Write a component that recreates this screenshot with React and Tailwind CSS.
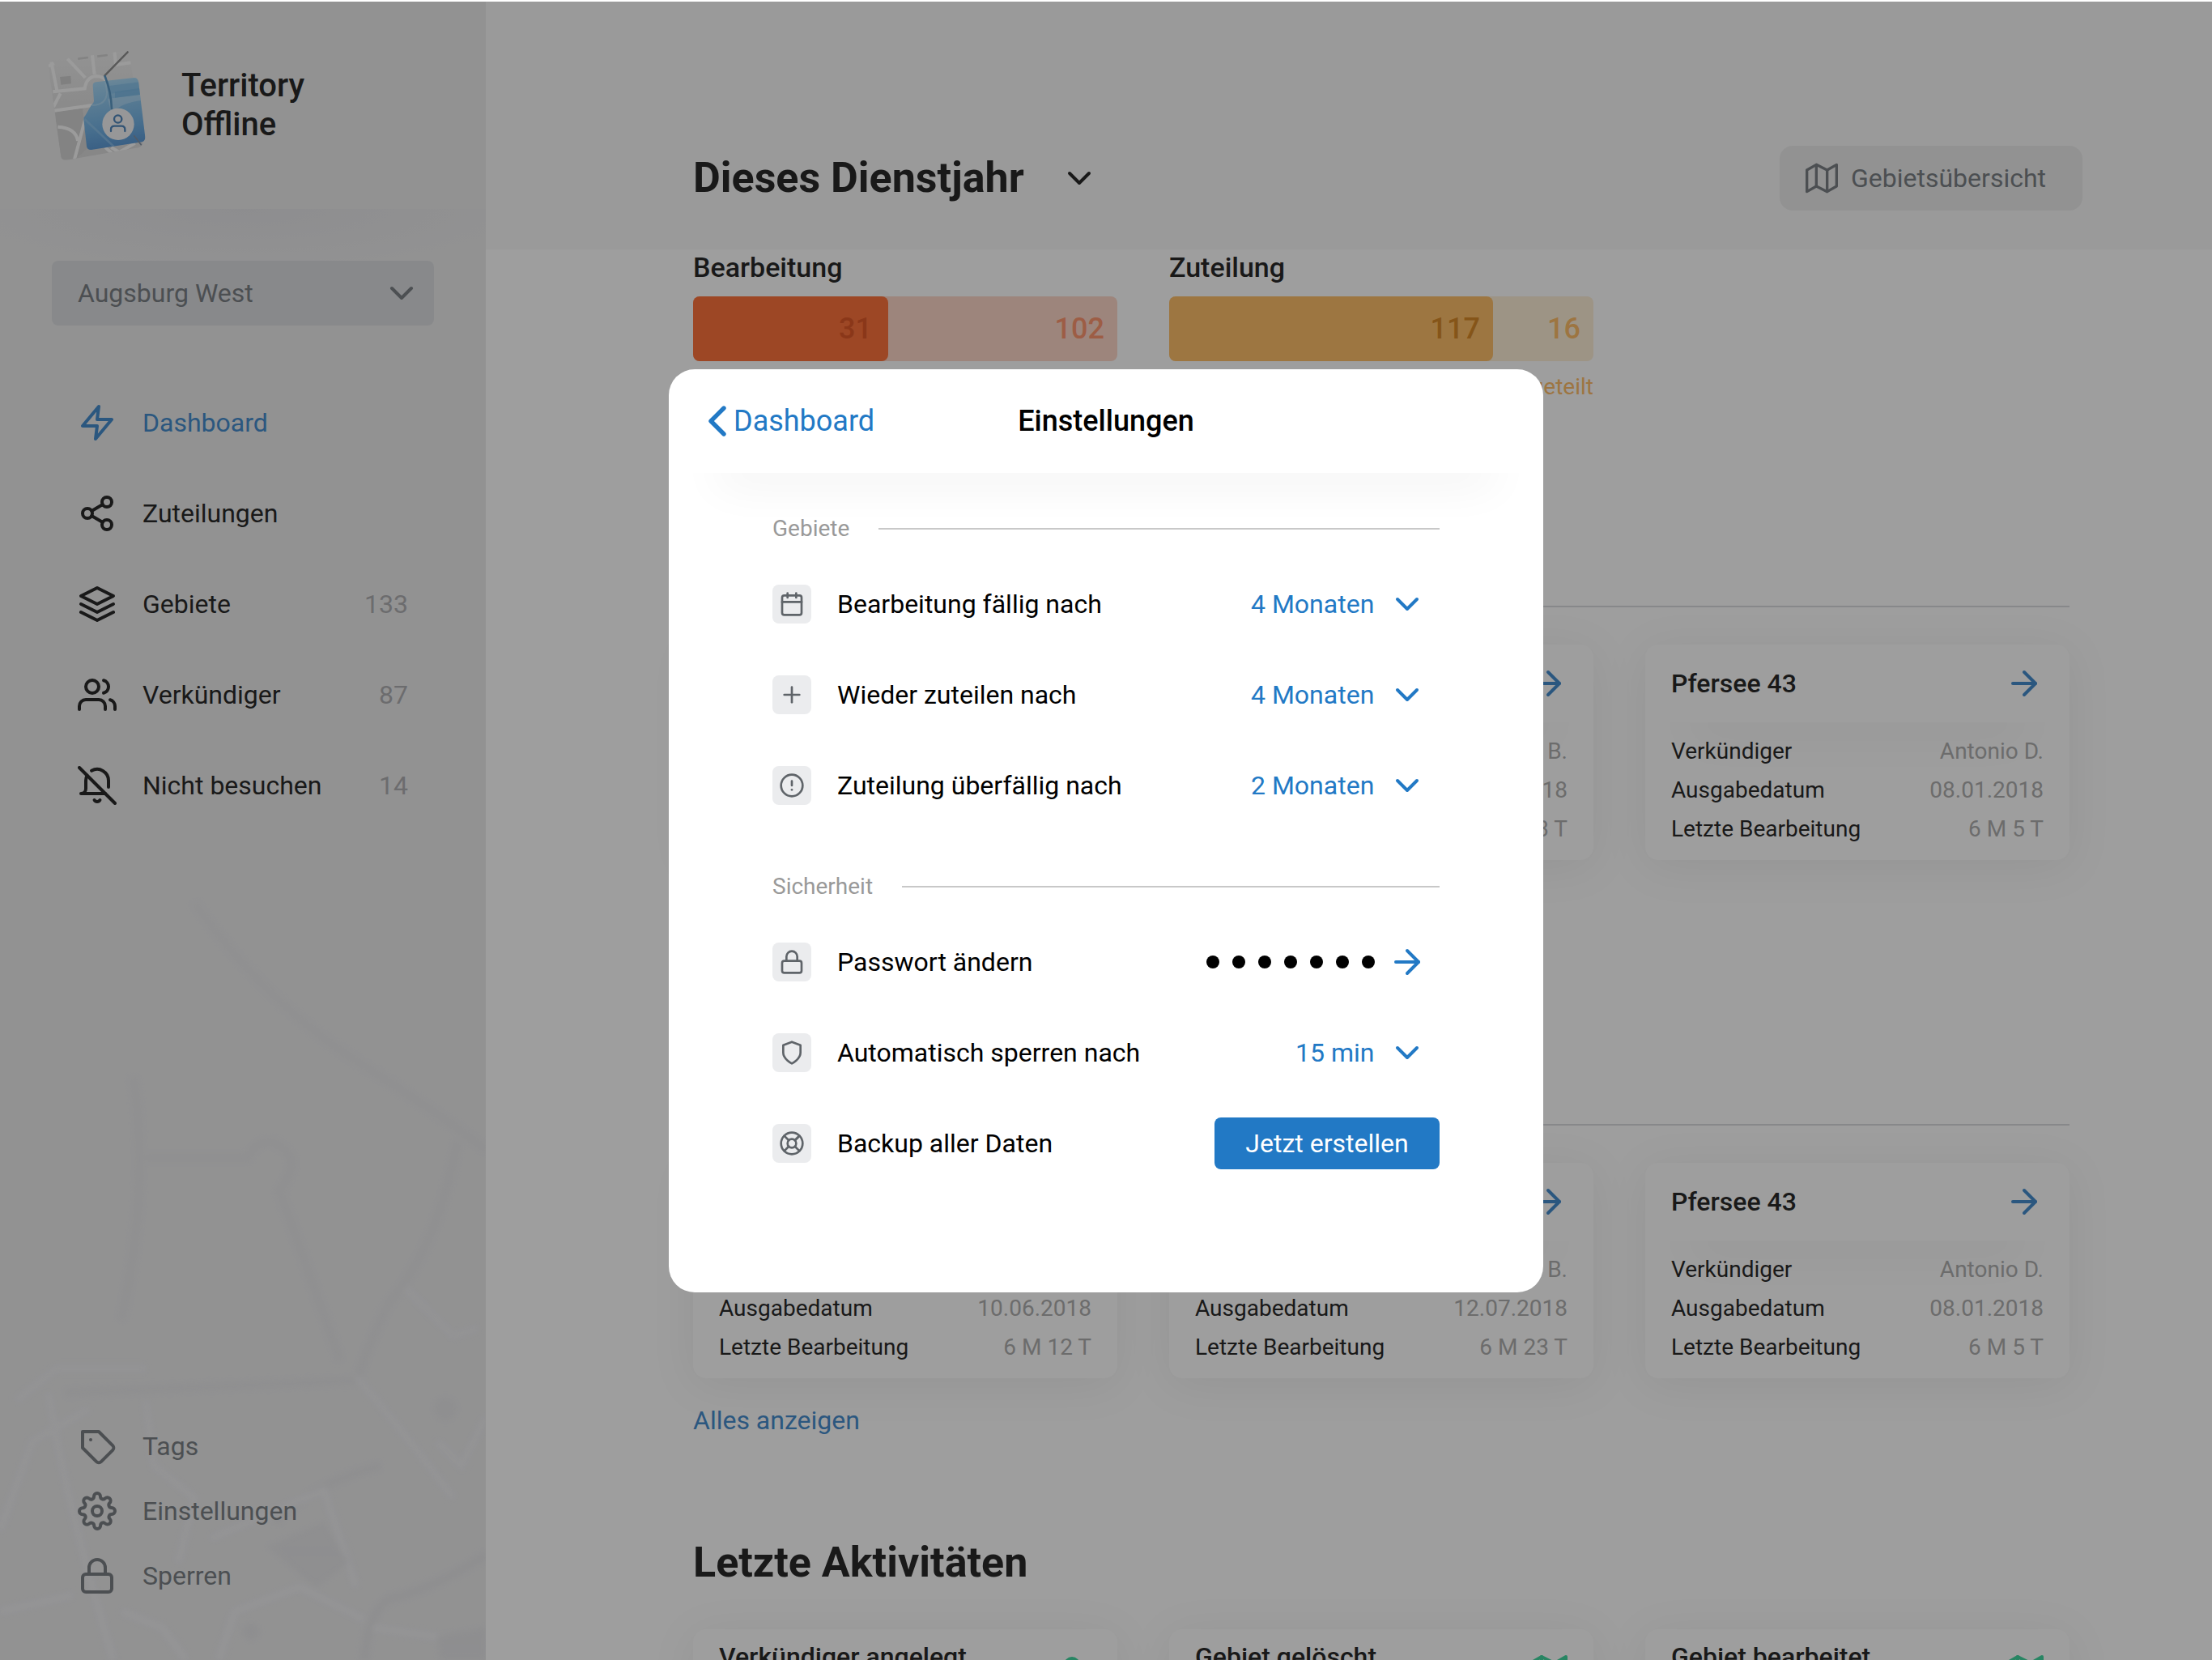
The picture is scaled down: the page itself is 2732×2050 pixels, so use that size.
import React, { useId } from "react";
import {
  FiZap,
  FiShare2,
  FiLayers,
  FiUsers,
  FiSettings,
  FiLock,
  FiMap,
  FiUser,
  FiChevronDown,
  FiArrowRight,
  FiCalendar,
  FiPlus,
  FiAlertCircle,
  FiShield,
  FiLifeBuoy,
} from "react-icons/fi";

function StrokeIcon({ viewBox = "0 0 24 24", className, children }) {
  return (
    <svg
      viewBox={viewBox}
      fill="none"
      stroke="currentColor"
      strokeWidth="2"
      strokeLinecap="round"
      strokeLinejoin="round"
      className={className}
      aria-hidden="true"
    >
      {children}
    </svg>
  );
}

function BellOffIcon({ className }) {
  return (
    <StrokeIcon className={className}>
      <path d="M8.56 2.9A7 7 0 0 1 19 9v4" />
      <path d="M17 17H2a3 3 0 0 0 3-3V9a7 7 0 0 1 .78-3.22" />
      <path d="M13.73 21a2 2 0 0 1-3.46 0" />
      <path d="M1 1l22 22" />
    </StrokeIcon>
  );
}

function TagIcon({ className }) {
  return (
    <StrokeIcon className={className}>
      <path d="M21.59 14.41l-7.17 7.17a2 2 0 0 1-2.83 0L3 13V3h10l8.59 8.59a2 2 0 0 1 0 2.82z" />
      <path d="M8 8h.01" />
    </StrokeIcon>
  );
}

function BackIcon({ className }) {
  return (
    <StrokeIcon viewBox="7.5 4.5 9 15" className={className}>
      <path d="M15 18l-6-6 6-6" />
    </StrokeIcon>
  );
}

function Logo() {
  return (
    <svg viewBox="30 36 360 408" className="h-[136px] w-[120px] shrink-0" aria-hidden="true">
      <defs>
        <linearGradient id="logo-blue" x1="0" y1="0" x2="0.15" y2="1">
          <stop offset="0" stopColor="#a9dcf8" />
          <stop offset="0.35" stopColor="#7fc0ec" />
          <stop offset="0.7" stopColor="#5aa5e0" />
          <stop offset="1" stopColor="#3b83cc" />
        </linearGradient>
        <linearGradient id="logo-grey" x1="0" y1="0" x2="0" y2="1">
          <stop offset="0" stopColor="#ebebeb" />
          <stop offset="0.5" stopColor="#dadada" />
          <stop offset="1" stopColor="#d2d2d2" />
        </linearGradient>
        <clipPath id="logo-sheet">
          <path d="M28 88 44 72 318 38Q327 37 329 46L378 378Q379 390 366 396L96 443Q80 446 76 430Z" />
        </clipPath>
        <clipPath id="logo-area">
          <path d="M194 168Q193 156 206 154L346 138Q360 137 363 152L388 358Q389 372 376 376L188 405Q174 406 171 392L160 292Q159 284 166 278L188 240Q198 232 198 224Z" />
        </clipPath>
      </defs>
      <g clipPath="url(#logo-sheet)">
        <rect x="20" y="30" width="370" height="420" fill="url(#logo-grey)" />
        <path d="M54 266 156 250 172 400 130 440 70 440Z" fill="#cbcbcb" />
        <path d="M72 135 112 131 114 160 76 164Z" fill="#c6c6c6" />
        <path d="M138 64 176 59 177 67 139 72ZM210 55 248 50 249 58 211 63Z" fill="#cbcbcb" />
        <g fill="none" stroke="#fafafa" strokeWidth="12">
          <path d="M40 80 62 190" />
          <path d="M30 95 50 85" />
          <path d="M100 68 166 138" />
          <path d="M192 55 200 125" />
          <path d="M274 40 279 90 335 82" />
          <path d="M46 190 164 178Q170 134 208 132 240 134 246 156" />
          <path d="M74 196 48 246" />
          <path d="M48 260 192 240" />
          <path d="M64 320Q132 324 138 372" />
          <path d="M166 290 126 440" />
          <path d="M240 396 290 440" />
          <path d="M262 396 292 414 350 380" />
        </g>
      </g>
      <g clipPath="url(#logo-area)">
        <rect x="150" y="130" width="250" height="290" fill="url(#logo-blue)" />
        <path d="M254 168 366 154 370 182 256 198Z" fill="#6cb3e6" opacity="0.7" />
        <path d="M250 216 374 200 376 222Q300 230 262 270Z" fill="#c4e5fa" opacity="0.45" />
        <path d="M276 190 370 176 372 200 276 212Z" fill="#5fa9e0" opacity="0.7" />
        <path d="M164 292 290 410" stroke="#8fc6ee" strokeWidth="8" opacity="0.5" />
        <path d="M190 240Q246 240 246 190L240 150" fill="none" stroke="#b5dff8" strokeWidth="6" opacity="0.5" />
      </g>
      <path d="M323 43 238 130" stroke="#7a7a7a" strokeWidth="7" strokeLinecap="round" />
      <path d="M238 130Q262 190 264 256" fill="none" stroke="#3f87bd" strokeWidth="8" />
      <path d="M346 352 374 388" stroke="#6d7f96" strokeWidth="5" />
      <circle cx="288" cy="310" r="59" fill="#f2f2f4" />
      <g fill="none" stroke="#2f6fae" strokeWidth="7" strokeLinecap="round">
        <circle cx="287" cy="291" r="14" />
        <path d="M261 336V330Q261 317 274 317H300Q313 317 313 330V336" />
      </g>
    </svg>
  );
}

function SidebarMap() {
  return (
    <svg
      viewBox="0 0 600 1100"
      preserveAspectRatio="xMidYMax slice"
      className="absolute inset-x-0 bottom-0 h-[1100px] w-full"
      aria-hidden="true"
    >
      <defs>
        <linearGradient id="map-fade" x1="0" y1="0" x2="0" y2="1">
          <stop offset="0" stopColor="#fff" stopOpacity="0.35" />
          <stop offset="0.6" stopColor="#fff" stopOpacity="0.5" />
          <stop offset="1" stopColor="#fff" stopOpacity="0.8" />
        </linearGradient>
        <mask id="map-mask">
          <rect width="600" height="1100" fill="url(#map-fade)" />
        </mask>
        <filter id="map-soft">
          <feGaussianBlur stdDeviation="3" />
        </filter>
      </defs>
      <g mask="url(#map-mask)" fill="none" filter="url(#map-soft)">
        <g stroke="#dfdfe2" strokeWidth="10">
          <path d="M240 165Q330 290 440 360T600 470" />
          <path d="M180 480 305 480Q330 440 360 480 362 500 345 520L420 730" />
          <path d="M165 380Q185 520 150 680" />
          <path d="M565 460Q540 590 480 660 450 720 440 760" />
          <path d="M80 770 440 755" />
          <path d="M340 930Q390 880 470 860" />
          <path d="M600 970Q540 1010 480 1025 455 1040 450 1100" />
        </g>
        <g stroke="#ededf0" strokeWidth="9">
          <path d="M60 770Q80 900 140 1100" />
          <path d="M260 950 400 890 440 1010" />
          <path d="M440 750Q500 820 560 900" />
          <path d="M270 1100 290 1040 370 1010 450 1050" />
          <path d="M460 1060 600 1080" />
          <path d="M150 1040 200 1060 230 1100" />
          <path d="M540 830 570 860 600 800" />
          <path d="M0 940 40 830 110 790" />
          <path d="M0 1040 90 1020" />
          <path d="M180 780 190 860 240 900 220 980" />
          <path d="M20 780 70 740 180 740" />
          <path d="M500 640 560 700 590 690" />
        </g>
        <g fill="#dfdfe2">
          <path d="M330 960 400 930 430 980 390 1010Z" />
          <path d="M540 1070 600 1060V1100H544Z" />
          <circle cx="310" cy="1065" r="10" />
          <circle cx="550" cy="790" r="14" />
        </g>
      </g>
    </svg>
  );
}

const navItems = [
  { icon: FiZap, label: "Dashboard", active: true },
  { icon: FiShare2, label: "Zuteilungen" },
  { icon: FiLayers, label: "Gebiete", count: 133 },
  { icon: FiUsers, label: "Verkündiger", count: 87 },
  { icon: BellOffIcon, label: "Nicht besuchen", count: 14 },
];

const footerItems = [
  { icon: TagIcon, label: "Tags" },
  { icon: FiSettings, label: "Einstellungen" },
  { icon: FiLock, label: "Sperren" },
];

function Sidebar() {
  return (
    <aside className="relative flex w-[600px] shrink-0 flex-col bg-[#e8e8e9]">
      <SidebarMap />
      <div className="flex h-64 shrink-0 items-center gap-11 pl-15">
        <Logo />
        <p className="text-[40px] leading-12 font-medium">
          Territory
          <br />
          Offline
        </p>
      </div>
      <div className="h-16 shrink-0 bg-[radial-gradient(ellipse_at_top,#dfdfe3,transparent_80%)]" />
      <div className="relative mx-16">
        <select
          aria-label="Versammlung"
          className="h-20 w-full appearance-none rounded-lg bg-[#d5d7da] px-8 text-[32px] text-[#62686e]"
        >
          <option>Augsburg West</option>
        </select>
        <FiChevronDown className="pointer-events-none absolute top-4 right-4 size-12 text-[#62686e]" />
      </div>
      <nav className="relative mt-16 px-24">
        {navItems.map(({ icon: Icon, label, count, active }) => (
          <a
            key={label}
            href="#"
            className={
              active
                ? "flex h-28 items-center gap-8 text-[#2478c4]"
                : "flex h-28 items-center gap-8 text-black"
            }
          >
            <Icon className="size-12 shrink-0" />
            <span className="flex-1">{label}</span>
            {count && <span className="text-[#a0a0a3]">{count}</span>}
          </a>
        ))}
      </nav>
      <nav className="relative mt-auto px-24 pb-16">
        {footerItems.map(({ icon: Icon, label }) => (
          <a key={label} href="#" className="flex h-20 items-center gap-8 text-[#62686e]">
            <Icon className="size-12 shrink-0" />
            {label}
          </a>
        ))}
      </nav>
    </aside>
  );
}

function HeaderShadow() {
  return (
    <div className="h-15 overflow-hidden">
      <div className="mx-18 -mt-1 h-1 shadow-[0_0_56px_12px_rgba(0,0,0,0.07)]" />
    </div>
  );
}

const meters = [
  {
    title: "Bearbeitung",
    done: 31,
    rest: 102,
    track: "flex h-20 rounded-lg bg-[#fed0be] text-[#fe8355]",
    fill: "flex w-[46%] items-center justify-end rounded-lg bg-[#fd5917] pr-5 text-[#d93a00]",
    caption: "Nicht bearbeitet",
    captionClass: "mt-3 text-right text-[28px] leading-10 text-[#fe8355]",
  },
  {
    title: "Zuteilung",
    done: 117,
    rest: 16,
    track: "flex h-20 rounded-lg bg-[#feebd0] text-[#feb04d]",
    fill: "flex w-[400px] items-center justify-end rounded-lg bg-[#feb34d] pr-4 text-[#d07300]",
    caption: "Nicht zugeteilt",
    captionClass: "mt-3 text-right text-[28px] leading-10 text-[#feb04d]",
  },
];

const territories = [
  { title: "Pfersee 12", name: "Maria K.", date: "10.06.2018", last: "6 M 12 T" },
  { title: "Pfersee 27", name: "Thomas B.", date: "12.07.2018", last: "6 M 23 T" },
  { title: "Pfersee 43", name: "Antonio D.", date: "08.01.2018", last: "6 M 5 T" },
];

const activities = [
  { title: "Verkündiger angelegt", icon: FiUser },
  { title: "Gebiet gelöscht", icon: FiMap },
  { title: "Gebiet bearbeitet", icon: FiMap },
];

function TerritoryCard({ title, name, date, last }) {
  const rows = [
    ["Verkündiger", name],
    ["Ausgabedatum", date],
    ["Letzte Bearbeitung", last],
  ];
  return (
    <article className="rounded-2xl bg-white pb-3.5 shadow-[0_8px_56px_rgba(0,0,0,0.08)]">
      <header className="flex h-24 items-center justify-between px-8">
        <h3 className="text-[32px] font-medium">{title}</h3>
        <button type="button" aria-label={`${title} öffnen`} className="text-[#2478c4]">
          <FiArrowRight className="size-12" />
        </button>
      </header>
      <HeaderShadow />
      <dl className="relative -mt-12 px-8 text-[28px] leading-12">
        {rows.map(([key, value]) => (
          <div key={key} className="flex justify-between">
            <dt>{key}</dt>
            <dd className="text-[#a0a0a0]">{value}</dd>
          </div>
        ))}
      </dl>
    </article>
  );
}

function TerritorySection() {
  return (
    <section>
      <hr className="border-t-2 border-[#d4d5d8]" />
      <div className="mt-[46px] grid grid-cols-3 gap-16">
        {territories.map((t) => (
          <TerritoryCard key={t.title} {...t} />
        ))}
      </div>
      <a href="#" className="mt-8 block w-fit leading-10 text-[#2478c4]">
        Alles anzeigen
      </a>
    </section>
  );
}

function Dashboard() {
  return (
    <main className="min-w-0 flex-1 overflow-hidden">
      <header className="flex h-[306px] items-end justify-between bg-[#f8f8f8] pr-40 pb-12 pl-64">
        <div className="relative flex h-20 items-center">
          <select
            aria-label="Zeitraum"
            className="appearance-none pr-23 text-[52px] leading-16 font-bold"
          >
            <option>Dieses Dienstjahr</option>
          </select>
          <FiChevronDown className="pointer-events-none absolute right-0 size-12" />
        </div>
        <button
          type="button"
          className="flex h-20 min-w-[374px] items-center gap-4 rounded-2xl bg-[#e8e8e8] px-8 text-[#62686e]"
        >
          <FiMap className="size-10" />
          Gebietsübersicht
        </button>
      </header>
      <div className="pr-44 pl-64">
        <div className="grid grid-cols-3 gap-16">
          {meters.map((m) => (
            <section key={m.title}>
              <h2 className="mb-3.5 text-[34px] leading-11 font-medium">{m.title}</h2>
              <div className={`${m.track} text-[36px] font-medium`}>
                <div className={m.fill}>{m.done}</div>
                <div className="flex flex-1 items-center justify-end pr-4">{m.rest}</div>
              </div>
              <p className={m.captionClass}>{m.caption}</p>
            </section>
          ))}
        </div>
        <div className="mt-[250px] flex flex-col gap-[254px]">
          <TerritorySection />
          <TerritorySection />
        </div>
        <h2 className="mt-[124px] text-[52px] leading-16 font-bold">Letzte Aktivitäten</h2>
        <div className="mt-[50px] grid grid-cols-3 gap-16">
          {activities.map(({ title, icon: Icon }) => (
            <article
              key={title}
              className="h-64 rounded-2xl bg-white shadow-[0_8px_56px_rgba(0,0,0,0.08)]"
            >
              <header className="flex h-[108px] items-center justify-between px-8">
                <h3 className="h-20 text-[32px] leading-10 font-medium">{title}</h3>
                <Icon className="size-12 text-[#1dd08e]" />
              </header>
            </article>
          ))}
        </div>
      </div>
    </main>
  );
}

function SettingsGroup({ title, children }) {
  return (
    <section>
      <h3 className="mb-4 flex h-[42px] items-center gap-9 text-[28px] text-[#999999]">
        {title}
        <span className="h-0.5 flex-1 bg-[#c8c8c8]" />
      </h3>
      {children}
    </section>
  );
}

function IconTile({ icon: Icon }) {
  return (
    <span className="flex size-12 shrink-0 items-center justify-center rounded-lg bg-[#ebecee] text-[#5f6469]">
      <Icon className="size-8" />
    </span>
  );
}

function SelectRow({ icon, label, value }) {
  const id = useId();
  return (
    <div className="flex h-28 items-center gap-8">
      <IconTile icon={icon} />
      <label htmlFor={id} className="flex-1">
        {label}
      </label>
      <div className="relative flex items-center text-[#2279c5]">
        <select id={id} defaultValue={value} className="appearance-none pr-20">
          <option>{value}</option>
        </select>
        <FiChevronDown className="pointer-events-none absolute right-4 size-12" />
      </div>
    </div>
  );
}

function SettingsDialog() {
  return (
    <div
      role="dialog"
      aria-modal="true"
      aria-labelledby="settings-title"
      className="w-[1080px] rounded-4xl bg-white pb-32"
    >
      <header className="grid h-32 grid-cols-3 items-center px-12 text-[36px]">
        <button type="button" className="flex items-center gap-2 text-[#2279c5]">
          <BackIcon className="h-10 w-6" />
          Dashboard
        </button>
        <h2 id="settings-title" className="text-center font-medium">
          Einstellungen
        </h2>
      </header>
      <HeaderShadow />
      <div className="-mt-3 flex flex-col gap-12 px-32">
        <SettingsGroup title="Gebiete">
          <SelectRow icon={FiCalendar} label="Bearbeitung fällig nach" value="4 Monaten" />
          <SelectRow icon={FiPlus} label="Wieder zuteilen nach" value="4 Monaten" />
          <SelectRow icon={FiAlertCircle} label="Zuteilung überfällig nach" value="2 Monaten" />
        </SettingsGroup>
        <SettingsGroup title="Sicherheit">
          <div className="flex h-28 items-center gap-8">
            <IconTile icon={FiLock} />
            <span className="flex-1">Passwort ändern</span>
            <button
              type="button"
              aria-label="Passwort ändern"
              className="flex items-center gap-4 pr-4 text-[#2279c5]"
            >
              {[0, 1, 2, 3, 4, 5, 6].map((i) => (
                <span key={i} className="size-4 rounded-full bg-black" />
              ))}
              <FiArrowRight className="size-12" />
            </button>
          </div>
          <SelectRow icon={FiShield} label="Automatisch sperren nach" value="15 min" />
          <div className="flex h-28 items-center gap-8">
            <IconTile icon={FiLifeBuoy} />
            <span className="flex-1">Backup aller Daten</span>
            <button
              type="button"
              className="h-16 min-w-[278px] rounded-lg bg-[#2279c5] px-8 text-white"
            >
              Jetzt erstellen
            </button>
          </div>
        </SettingsGroup>
      </div>
    </div>
  );
}

export default function App() {
  return (
    <div className="h-screen overflow-hidden bg-white pt-0.5 font-['Roboto',sans-serif] text-[32px] text-black">
      <div className="flex h-full">
        <Sidebar />
        <Dashboard />
      </div>
      <div className="fixed inset-x-0 top-0.5 bottom-0 flex items-center justify-center bg-[#343434]/48">
        <SettingsDialog />
      </div>
    </div>
  );
}
